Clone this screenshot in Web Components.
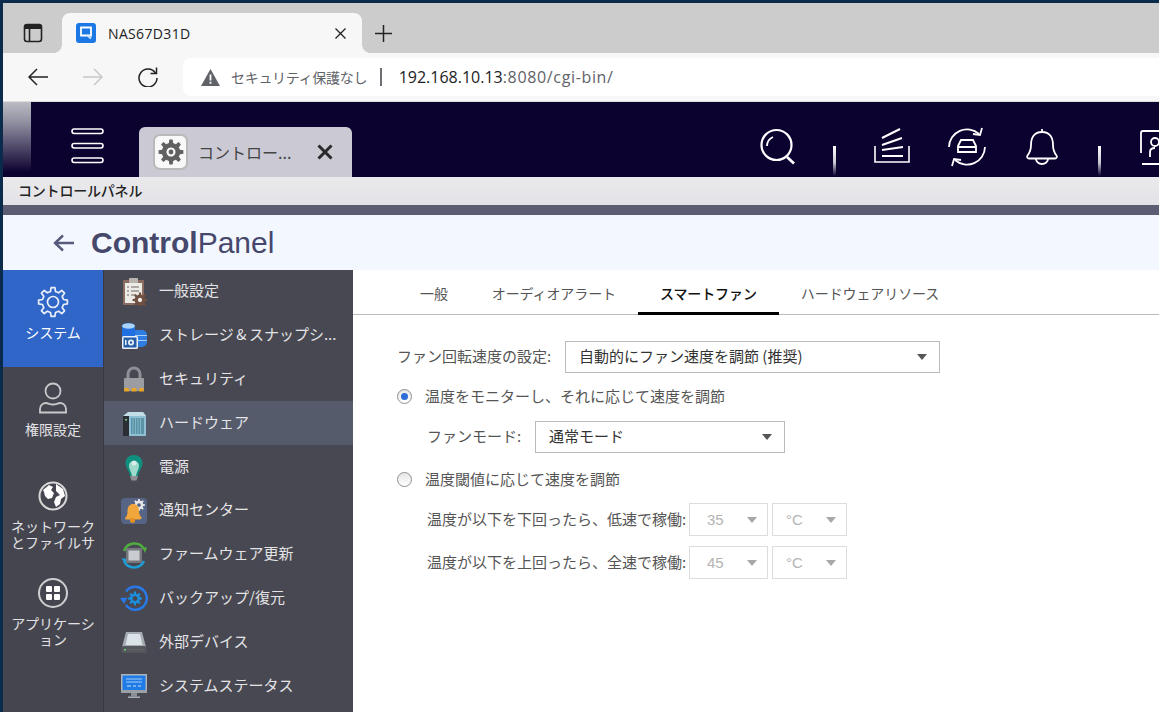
<!DOCTYPE html>
<html lang="ja"><head><meta charset="utf-8"><title>NAS67D31D</title>
<style>
html,body{margin:0;height:100%;overflow:hidden}
body{width:1159px;height:712px;background:#0b2b4d;padding:3px 0 0 3px;box-sizing:border-box;font-family:"Liberation Sans","Noto Sans CJK JP",sans-serif;font-size:14px}
</style></head><body>
<browser-chrome>
  <span slot="title">NAS67D31D</span>
  <span slot="warn">セキュリティ保護なし</span>
  <span slot="host">192.168.10.13</span>
  <span slot="path">:8080/cgi-bin/</span>
</browser-chrome>
<nas-topbar><span slot="tab">コントロー...</span></nas-topbar>
<cp-titlebar>コントロールパネル</cp-titlebar>
<cp-header></cp-header>
<cp-body>
  <cp-sidebar slot="side">
    <side-item icon="gear" selected>システム</side-item>
    <side-item icon="user">権限設定</side-item>
    <side-item icon="globe">ネットワーク<br>とファイルサ</side-item>
    <side-item icon="apps">アプリケーシ<br>ョン</side-item>
  </cp-sidebar>
  <cp-menu slot="menu">
    <menu-item icon="clip">一般設定</menu-item>
    <menu-item icon="stor">ストレージ<span style="margin:0 2.500px">&amp;</span>スナップシ...</menu-item>
    <menu-item icon="lock">セキュリティ</menu-item>
    <menu-item icon="nas" selected>ハードウェア</menu-item>
    <menu-item icon="bulb">電源</menu-item>
    <menu-item icon="noti">通知センター</menu-item>
    <menu-item icon="firm">ファームウェア更新</menu-item>
    <menu-item icon="back">バックアップ/復元</menu-item>
    <menu-item icon="disk">外部デバイス</menu-item>
    <menu-item icon="mon">システムステータス</menu-item>
  </cp-menu>
  <fan-panel slot="main"></fan-panel>
</cp-body>
<script>
const JP='"Noto Sans CJK JP","Liberation Sans",sans-serif';
function gear(cx,cy,ro,ri,n){
  let d='';const st=Math.PI*2/n;
  for(let i=0;i<n;i++){
    const a=i*st-Math.PI/2;
    const pts=[[ri,a-st*.30],[ro,a-st*.17],[ro,a+st*.17],[ri,a+st*.30]];
    pts.forEach((p,j)=>{d+=(i==0&&j==0?'M':'L')+(cx+p[0]*Math.cos(p[1])).toFixed(2)+' '+(cy+p[0]*Math.sin(p[1])).toFixed(2)+' '});
  }
  return d+'Z';
}
function def(name,html){
  customElements.define(name,class extends HTMLElement{
    constructor(){super();const r=this.attachShadow({mode:'open'});r.innerHTML=typeof html==='function'?html(this):html;}
  });
}
def('browser-chrome',`<style>
:host{display:block;font-family:"Open Sans","Noto Sans CJK JP",sans-serif;color:#222}
.strip{height:50px;background:#ccc;display:flex;align-items:flex-end}
.panel{width:59px;height:40px;display:flex;align-items:center;justify-content:center;box-sizing:border-box}
.tab{width:300px;height:40px;background:#f7f7f7;border-radius:8px 8px 0 0;display:flex;align-items:center;position:relative;padding:0 16px 0 14px;box-sizing:border-box;font-size:14px}
.tab:before,.tab:after{content:"";position:absolute;bottom:0;width:8px;height:8px}
.tab:before{left:-8px;background:radial-gradient(circle at 0 0,#ccc 7.5px,#f7f7f7 8px)}
.tab:after{right:-8px;background:radial-gradient(circle at 100% 0,#ccc 7.5px,#f7f7f7 8px)}
.fav{margin-right:12px;display:flex}
.ttl{flex:1;letter-spacing:.35px}
.plus{height:40px;display:flex;align-items:center;margin-left:13px}
.bar{height:48px;background:#f7f7f7;display:flex;align-items:center;overflow:hidden}
.nav{display:flex;align-items:center;margin-left:25px;gap:35px}
.addr{margin-left:25px;height:38px;width:1000px;flex:none;background:#fff;border-radius:8px 0 0 8px;display:flex;align-items:center;padding-left:18px;box-sizing:border-box}
.warn{color:#5f6368;font-size:14px;margin-left:11px;font-family:${JP};letter-spacing:-.3px}
.sep{width:1.5px;height:18px;background:#6b6f74;margin:0 17px 0 13px}
.host{font-size:16px;color:#202124}.path{font-size:16px;color:#5f6368;letter-spacing:.65px}
svg{display:block}
</style>
<div class="strip">
 <div class="panel"><svg width="20" height="20" viewBox="0 0 20 20" fill="none" stroke="#222" stroke-width="1.6"><rect x="1.5" y="1.5" width="17" height="17" rx="2.5"/><path d="M2 2.5h16v3H2z" fill="#222" stroke-width="1"/><path d="M6.5 5.5v13"/></svg></div>
 <div class="tab">
  <span class="fav"><svg width="20" height="20" viewBox="0 0 20 20"><rect width="20" height="20" rx="3" fill="#1c78e4"/><path d="M5 4.500h10v8H5z" fill="none" stroke="#fff" stroke-width="1.8"/><path d="M11 12l4 3.5" stroke="#cfe3fb" stroke-width="2.2"/></svg></span>
  <span class="ttl"><slot name="title"></slot></span>
  <svg width="11" height="11" viewBox="0 0 11 11" stroke="#222" stroke-width="1.3"><path d="M.5.5l10 10M10.500 .5l-10 10"/></svg>
 </div>
 <div class="plus"><svg width="17" height="17" viewBox="0 0 17 17" stroke="#222" stroke-width="1.5"><path d="M8.500 0v17M0 8.500h17"/></svg></div>
</div>
<div class="bar">
 <div class="nav">
  <svg width="20" height="18" viewBox="0 0 20 18" fill="none" stroke="#222" stroke-width="1.500"><path d="M20 9H1M9 1L1 9l8 8"/></svg>
  <svg width="20" height="18" viewBox="0 0 20 18" fill="none" stroke="#c8c8c8" stroke-width="1.500"><path d="M0 9h19M11 1l8 8-8 8"/></svg>
  <svg width="20" height="20" viewBox="0 0 20 20" fill="none" stroke="#222" stroke-width="1.500"><path d="M17.500 6A9 9 0 1 0 19 11"/><path d="M18.500 0.500V6.500H12.500"/></svg>
 </div>
 <div class="addr">
  <svg width="19" height="17" viewBox="0 0 19 17"><path d="M9.500 0L19 17H0z" fill="#5f6368"/><path d="M8.600 5.500h1.800v6H8.600zM8.600 12.700h1.800v2H8.600z" fill="#fff"/></svg>
  <span class="warn"><slot name="warn"></slot></span><span class="sep"></span>
  <span class="host"><slot name="host"></slot></span><span class="path"><slot name="path"></slot></span>
 </div>
</div>`);

def('nas-topbar',`<style>
:host{display:flex;height:76px;background:#0c0230;border-top:1px solid #ddd;box-sizing:border-box;overflow:hidden;align-items:flex-start}
.fade{width:28px;height:70px;flex:none;background:linear-gradient(#bcbcc4,#8f8ea0 30%,#2a2048 85%,#0c0230)}
.ham{margin:26px 0 0 40px;flex:none}
.tab{margin:25px 0 0 35px;width:213px;height:50px;flex:none;background:#cbcad4;border-radius:6px 6px 0 0;display:flex;align-items:center;box-sizing:border-box;padding:0 18px 0 14px;font:16px ${JP};color:#444}
.tile{width:35px;height:36px;background:#f8f8f8;border:2px solid #b9b9b9;border-radius:7px;box-sizing:border-box;display:flex;align-items:center;justify-content:center;margin-right:10px;flex:none}
.t{flex:1;white-space:nowrap;overflow:hidden}
.i{flex:none;display:block}
.sep{flex:none;width:2.500px;height:30px;margin-top:44px;background:linear-gradient(#fff,#c9c9d2 55%,#0c0230)}
</style>
<div class="fade"></div>
<svg class="ham" width="33" height="36" viewBox="0 0 33 36" fill="#0c0230" stroke="#fff" stroke-width="1.600"><rect x="1" y="1" width="31" height="4.500" rx="2.250"/><rect x="1" y="15.500" width="31" height="4.500" rx="2.250"/><rect x="1" y="30" width="31" height="4.500" rx="2.250"/></svg>
<div class="tab"><span class="tile"><svg width="26" height="26" viewBox="0 0 26 26"><path fill="#606060" fill-rule="evenodd" d="${gear(13,13,12.500,9.200,8)} M13 8.500a4.500 4.500 0 1 0 .01 0Z"/><circle cx="13" cy="13" r="2.400" fill="#606060"/></svg></span><span class="t"><slot name="tab"></slot></span>
<svg width="16" height="16" viewBox="0 0 16 16" stroke="#2a2a2a" stroke-width="3" style="flex:none;margin-right:1px;margin-left:-1px"><path d="M1.500 1.500l13 13M14.500 1.500l-13 13"/></svg></div>
<svg class="i" style="margin:25px 0 0 407px" width="38" height="38" viewBox="759 127 38 38" fill="none" stroke="#fff" stroke-width="2.200"><circle cx="776.500" cy="145" r="15"/><path d="M787 157l7 6.500" stroke-width="2.800"/><path d="M767 146a10 10 0 0 1 6-9" stroke-width="1.800"/></svg>
<span class="sep" style="margin-left:36px"></span>
<svg class="i" style="margin:25px 0 0 37.500px" width="38" height="38" viewBox="873 127 38 38" fill="none" stroke="#fff" stroke-width="1.600"><path d="M875 146v16h34v-16"/><path d="M882 138l18-9M882 145l20-7M882 150l21-3M882 156h21" stroke-width="2"/></svg>
<svg class="i" style="margin:25px 0 0 36px" width="40" height="40" viewBox="947 126 40 40" fill="none" stroke="#fff" stroke-width="1.800"><path d="M949 146a18 18 0 0 1 30-13"/><path d="M982 127l-2 7-7-1"/><path d="M985 146a18 18 0 0 1-30 13"/><path d="M952 165l2-7 7 1"/><path d="M958 151v-6l3-6h12l3 6v6z"/><path d="M958 146h18" stroke-width="2"/></svg>
<svg class="i" style="margin:25px 0 0 37px" width="36" height="40" viewBox="1024 126 36 40" fill="none" stroke="#fff" stroke-width="1.800"><path d="M1042 131c-8 0-11 6-11 13 0 5-1.500 8-3.500 10.500-1 1.500 0 3 1.500 3h26c1.500 0 2.500-1.500 1.500-3-2-2.500-3.500-5.500-3.500-10.500 0-7-3-13-11-13z"/><path d="M1042 128v3M1036 158a6 5 0 0 0 12 0"/></svg>
<span class="sep" style="margin-left:38px"></span>
<svg class="i" style="margin:25px 0 0 38.500px" width="30" height="40" viewBox="1139 126 30 40" fill="none" stroke="#fff" stroke-width="1.800"><path d="M1141 152v-20q0-2 2-2h22"/><circle cx="1155" cy="141" r="4"/><path d="M1150 156v-5q0-4 5-4"/><path d="M1142 163h24" stroke-width="2"/></svg>`);

def('cp-titlebar',`<style>:host{display:flex;align-items:center;height:28px;background:linear-gradient(#eaeaec,#e3e2e7);padding:0 0 3px 15px;font:500 14px ${JP};color:#222;box-sizing:border-box;letter-spacing:-.2px}</style><slot></slot>`);

def('cp-header',`<style>
:host{display:block;border-top:10px solid #5c5d73;background:#f3f7ff;height:65px;box-sizing:border-box}
.w{display:flex;align-items:center;height:55px;padding-left:50px;color:#45486b;font:30px "Liberation Sans",Arial,sans-serif}
svg{margin-right:17px;flex:none}
b{font-weight:700}
</style><div class="w"><svg width="21" height="18" viewBox="0 0 21 18" fill="none" stroke="#565a7c" stroke-width="2.400"><path d="M21 9H2M10 1.500L2 9l8 7.500"/></svg><span><b>Control</b>Panel</span></div>`);

def('cp-body',`<style>:host{display:flex;height:442px;background:#fff;overflow:hidden}
::slotted([slot=side]){flex:none}::slotted([slot=menu]){flex:none}::slotted([slot=main]){flex:1;min-width:0}</style>
<slot name="side"></slot><slot name="menu"></slot><slot name="main"></slot>`);

def('cp-sidebar',`<style>:host{display:block;width:101px;background:#45454f;border-right:1px solid #38383f;box-sizing:border-box}</style><slot></slot>`);

const SIDE={
 gear:`<path fill="none" stroke="#e8eefa" stroke-width="1.700" stroke-linejoin="round" d="${gear(16,17,14.500,10.800,8)}"/><circle cx="16" cy="17" r="5.500" fill="none" stroke="#e8eefa" stroke-width="1.700"/>`,
 user:`<g fill="none" stroke="#c9c9cc" stroke-width="1.800"><circle cx="16" cy="9" r="7.500"/><path d="M3 30.500v-3.500c0-3.500 3-6 6-6 2 0 3.500 1.500 7 1.500s5-1.500 7-1.500c3 0 6 2.500 6 6v3.500z"/></g>`,
 globe:`<circle cx="16" cy="17" r="13.500" fill="#45454f" stroke="#d8d8d8" stroke-width="2"/><path fill="#fff" d="M6 11l6-5 4 2-2 3 3 3-2 5-4 1-3-3-1-4zM19 5l7 5 2 7-4 3-1 5-4 3-2-5 2-5 4-2-4-4z"/>`,
 apps:`<circle cx="16" cy="17" r="14" fill="none" stroke="#cfcfd2" stroke-width="2"/><g fill="#fff"><rect x="9" y="10" width="6" height="6" rx="1"/><rect x="17" y="10" width="6" height="6" rx="1"/><rect x="9" y="18" width="6" height="6" rx="1"/><rect x="17" y="18" width="6" height="6" rx="1"/></g>`
};
def('side-item',el=>`<style>
:host{display:flex;flex-direction:column;align-items:center;height:97px;padding-top:15px;box-sizing:border-box;color:#e2e2e4;font:14px/16px ${JP};text-align:center;white-space:nowrap}
:host([selected]){background:#3066c7;color:#fff}
svg{display:block;margin-bottom:5px;flex:none}
</style><svg width="32" height="34" viewBox="0 0 32 34">${SIDE[el.getAttribute('icon')]}</svg><div><slot></slot></div>`);

def('cp-menu',`<style>:host{display:block;width:249px;background:#484852}</style><slot></slot>`);
const MI={
 clip:`<rect x="3" y="2" width="21" height="25" rx="1" fill="#8a6c60"/><rect x="5" y="5" width="17" height="20" fill="#ecebe6"/><rect x="9" y="0" width="9" height="5" rx="1" fill="#b9b4ae"/><path d="M7 9h2M11 9h8M7 13h2M11 13h8M7 17h2M11 17h4" stroke="#9a938c" stroke-width="1.400"/><path fill="#6e4f40" fill-rule="evenodd" d="${gear(20,22,7.500,5.400,8)} M20 19.800a2.200 2.200 0 1 0 .01 0Z"/>`,
 stor:`<rect x="10" y="8" width="17" height="17" rx="5" fill="#2f7de0"/><path d="M12 13.500h15M12 18.500h15" stroke="#a8d0f5" stroke-width="1.200"/><path d="M2 4c0-2 3.300-3 6.500-3S15 2 15 4v11H2z" fill="#1f6fe0"/><ellipse cx="8.500" cy="4" rx="6.500" ry="2.800" fill="#a9d4f7"/><rect x="2" y="14" width="16" height="13" rx="1.500" fill="#e9f1fa"/><rect x="3.500" y="15.500" width="13" height="10" fill="#245fa8"/><circle cx="11" cy="20.500" r="3" fill="#e9f1fa"/><circle cx="11" cy="20.500" r="1.200" fill="#245fa8"/><rect x="5" y="18" width="1.500" height="5" fill="#e9f1fa"/>`,
 lock:`<path d="M8 14V9a6 6 0 0 1 12 0v5" fill="none" stroke="#8f9097" stroke-width="3"/><rect x="4" y="13" width="20" height="13" rx="1" fill="#9c9da3"/><path d="M4.500 23h4l.8 3.500H4zM12 23h4l.8 3.500h-5.600zM19.500 23h4l.5 3.500h-5.300z" fill="#e8a526"/>`,
 nas:`<path d="M8 3h15l3 4v20H8z" fill="#8fbfd2"/><path d="M3 7l5-4 15 0 3 4z" fill="#c3dde6"/><rect x="3" y="7" width="6" height="20" fill="#2b2f35"/><rect x="11" y="9" width="13" height="16" fill="#5a93a6"/><path d="M13 9v16M15.500 9v16M18 9v16M20.500 9v16" stroke="#8fbfd2" stroke-width=".8"/><rect x="5" y="10" width="2" height="1.500" fill="#7fd18a"/>`,
 bulb:`<path d="M14 2c5.500 0 8.500 4 8.500 8 0 5-4 8-4.500 13h-8c-.5-5-4.500-8-4.500-13 0-4 3-8 8.500-8z" fill="#0f8f7e"/><path d="M14 8c3 0 5 2 5 4.500 0 4-2.500 6-3 11h-4c-.5-5-3-7-3-11C9 10 11 8 14 8z" fill="#9fd9cc"/><circle cx="14" cy="10" r="2.500" fill="#d8ece8"/><path d="M10 23h8l-1.500 4.500h-5z" fill="#8f8f95"/>`,
 noti:`<rect x="1" y="1" width="26" height="26" rx="4" fill="#566486"/><path fill="#e8e8e8" fill-rule="evenodd" d="${gear(19,8,6,4.300,8)} M19 6.200a1.800 1.800 0 1 0 .01 0Z"/><path d="M13 7c4 0 6 3 6 7 0 3 1 5 3 7l-2 1.500H5.500L5 21c2-1.500 2.500-4 2.500-7 0-4 2-7 5.500-7z" fill="#f0a63a"/><circle cx="12.500" cy="23.500" r="2.500" fill="#e88f20"/>`,
 firm:`<path d="M4 10A11 11 0 0 1 24 8" fill="none" stroke="#4fae3f" stroke-width="2.500"/><path d="M25 12l-3-6 5 .5z" fill="#4fae3f"/><path d="M24 20A11 11 0 0 1 4 20" fill="none" stroke="#1f9dd6" stroke-width="2.500"/><path d="M1.500 17l6 1-3 4z" fill="#1f9dd6"/><rect x="6" y="7" width="16" height="15" rx="1" fill="#77787e"/><rect x="8.500" y="9.500" width="11" height="10" fill="#c9cdd2"/>`,
 back:`<path d="M6 8.500A11.500 11.500 0 1 1 6 22" fill="none" stroke="#2878e6" stroke-width="2.600" transform="translate(0 -1)"/><path d="M0 14l7.500-.5L4 20z" fill="#2878e6"/><path fill="#1a8fe0" fill-rule="evenodd" d="${gear(15,14.500,7,5,8)} M15 12a2.500 2.500 0 1 0 .01 0Z"/>`,
 disk:`<path d="M6 4h16l4 15H2z" fill="#a6adb2"/><path d="M8 6h12l2.500 11H5.500z" fill="#dbe2e8"/><rect x="1.500" y="18" width="25" height="7" rx="1.500" fill="#55575c"/><rect x="4" y="21" width="2" height="1.500" fill="#6fd06a"/><path d="M8 21.800h16" stroke="#74767c" stroke-width="1" stroke-dasharray="1 1.500"/>`,
 mon:`<rect x="1" y="2" width="26" height="18" fill="#aeb4ba"/><rect x="2.500" y="3.500" width="23" height="15" fill="#1f7be6"/><path d="M6 7h16M6 10h16" stroke="#a8cdf5" stroke-width="1.200"/><path d="M7 14h4M13 14h3M18 14h3" stroke="#cfe3fb" stroke-width="1"/><rect x="1" y="18" width="26" height="3" fill="#9aa0a6"/><rect x="11" y="21" width="6" height="3.500" fill="#8b9096"/><rect x="8" y="24.500" width="12" height="1.500" fill="#a6acb2"/>`
};
def('menu-item',el=>`<style>
:host{display:flex;align-items:center;height:43.800px;box-sizing:border-box;padding-left:16px;color:#e4e4e6;font:15px ${JP};white-space:nowrap}
:host([selected]){background:#555b6b}
svg{flex:none;margin-right:11px;display:block}
.t{padding-bottom:4px}
</style><svg width="28" height="28" viewBox="0 0 28 28">${MI[el.getAttribute('icon')]}</svg><span class="t"><slot></slot></span>`);

def('sel-box',`<style>
:host{display:inline-flex;align-items:center;justify-content:space-between;box-sizing:border-box;height:32px;border:1px solid #bbb;background:#fff;padding:0 12px 0 13px;color:#333;font:15px ${JP}}
:host([disabled]){border-color:#ddd;color:#b4b4b4;padding:0 10px 0 17px;height:33px;font-family:"Liberation Sans",sans-serif}
span{padding-bottom:3px}
:host([disabled]) span{padding-bottom:0}
i{width:0;height:0;border-left:5px solid transparent;border-right:5px solid transparent;border-top:6px solid #555;flex:none}
:host([disabled]) i{border-top-color:#a8a8a8}
</style><span><slot></slot></span><i></i>`);

def('radio-row',`<style>
:host{display:flex;align-items:center;height:24px;color:#555;font:15px ${JP}}
.r{width:15px;height:15px;border-radius:50%;border:1px solid #8f8f8f;box-sizing:border-box;background:linear-gradient(#e6e6e6,#fff);margin:0 13px 0 0;display:flex;align-items:center;justify-content:center;flex:none}
:host([checked]) .r::after{content:"";width:7px;height:7px;border-radius:50%;background:#2d6bd6}
.t{padding-bottom:2px}
</style><span class="r"></span><span class="t"><slot></slot></span>`);

def('fan-panel',`<style>
:host{display:block;background:#fff;color:#555;font:15px ${JP}}
.tabs{display:flex;height:45px;border-bottom:1px solid #bbb;box-sizing:border-box;padding-left:45px;font-size:14px;letter-spacing:-.1px}
.tabs span{padding:0 22px;display:flex;align-items:center;color:#555;height:45px;box-sizing:border-box;white-space:nowrap}
.tabs span.on{color:#111;font-weight:500;border-bottom:3px solid #000;padding-top:3px}
.form{padding:26px 0 0 44px}
.row{display:flex;align-items:center}
label{white-space:nowrap;padding-bottom:3px}
.ind{padding-left:30px}
</style>
<div class="tabs"><span>一般</span><span>オーディオアラート</span><span class="on">スマートファン</span><span>ハードウェアリソース</span></div>
<div class="form">
 <div class="row"><label style="width:168px">ファン回転速度の設定:</label><sel-box style="width:375px">自動的にファン速度を調節 (推奨)</sel-box></div>
 <radio-row checked style="margin-top:11px">温度をモニターし、それに応じて速度を調節</radio-row>
 <div class="row ind" style="margin-top:13px"><label style="width:108px">ファンモード:</label><sel-box style="width:250px">通常モード</sel-box></div>
 <radio-row style="margin-top:14px">温度閾値に応じて速度を調節</radio-row>
 <div class="row ind" style="margin-top:12px"><label style="width:262px">温度が以下を下回ったら、低速で稼働:</label><sel-box disabled style="width:79px">35</sel-box><sel-box disabled style="width:75px;margin-left:4px;padding-left:13px">°C</sel-box></div>
 <div class="row ind" style="margin-top:10px"><label style="width:262px">温度が以下を上回ったら、全速で稼働:</label><sel-box disabled style="width:79px">45</sel-box><sel-box disabled style="width:75px;margin-left:4px;padding-left:13px">°C</sel-box></div>
</div>`);
</script>
</body></html>
